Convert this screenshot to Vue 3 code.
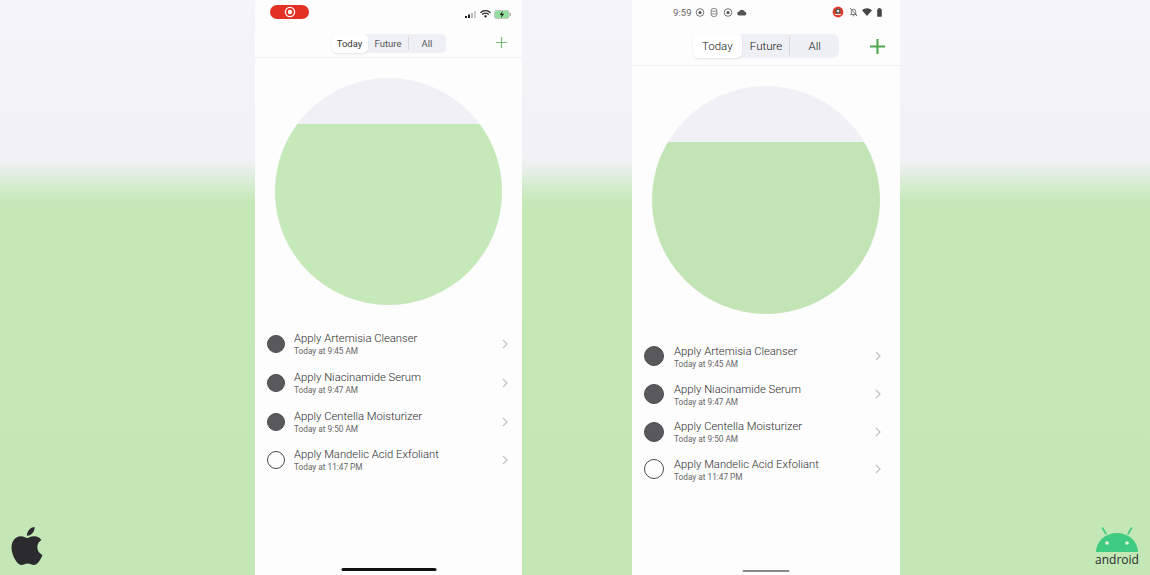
<script setup>
const tasks = [
  { title: 'Apply Artemisia Cleanser', time: 'Today at 9:45 AM', done: true },
  { title: 'Apply Niacinamide Serum', time: 'Today at 9:47 AM', done: true },
  { title: 'Apply Centella Moisturizer', time: 'Today at 9:50 AM', done: true },
  { title: 'Apply Mandelic Acid Exfoliant', time: 'Today at 11:47 PM', done: false },
]
const phones = [
  { id: 'ios', fill: '181px' },
  { id: 'droid', fill: '172px' },
]
</script>

<template>
  <div class="page">
    <div class="side side-left">
      <svg class="apple" viewBox="0 0 24 24" aria-label="Apple">
        <path fill="#2b2b2d" d="M12.152 6.896c-.948 0-2.415-1.078-3.96-1.04-2.04.027-3.91 1.183-4.961 3.014-2.117 3.675-.546 9.103 1.519 12.09 1.013 1.454 2.208 3.09 3.792 3.039 1.52-.065 2.09-.987 3.935-.987 1.831 0 2.35.987 3.96.948 1.637-.026 2.676-1.48 3.676-2.948 1.156-1.688 1.636-3.325 1.662-3.415-.039-.013-3.182-1.221-3.22-4.857-.026-3.04 2.48-4.494 2.597-4.559-1.429-2.09-3.623-2.324-4.39-2.376-2-.156-3.675 1.09-4.61 1.09zM15.53 3.83c.843-1.012 1.4-2.427 1.245-3.83-1.207.052-2.662.805-3.532 1.818-.78.896-1.454 2.338-1.273 3.714 1.338.104 2.715-.688 3.559-1.701"/>
      </svg>
    </div>

    <section v-for="p in phones" :key="p.id" class="phone" :class="p.id">
      <div class="status">
        <template v-if="p.id === 'ios'">
          <div class="rec">
            <svg width="12" height="12" viewBox="0 0 12 12"><circle cx="6" cy="6" r="4.6" fill="none" stroke="#fff" stroke-width="1.3"/><circle cx="6" cy="6" r="2.2" fill="#fff"/></svg>
          </div>
          <div class="grow"></div>
          <svg class="ios-ic" width="12" height="7" viewBox="0 0 12 7"><rect x="0" y="5" width="2" height="2" fill="#222"/><rect x="3" y="3.5" width="2" height="3.5" fill="#222"/><rect x="6" y="2" width="2" height="5" fill="#bbb"/><rect x="9" y="0" width="2" height="7" fill="#ccc"/></svg>
          <svg class="ios-ic" width="11" height="8" viewBox="0 0 11 8"><path d="M.5 2.8a7 7 0 0 1 10 0M2.2 4.5a4.6 4.6 0 0 1 6.6 0" fill="none" stroke="#222" stroke-width="1.3"/><path d="M3.9 6a2.2 2.2 0 0 1 3.2 0L5.500 7.800z" fill="#222"/></svg>
          <svg class="ios-ic" width="17" height="9" viewBox="0 0 17 9"><rect x=".5" y=".5" width="14.500" height="8" rx="2" fill="#93df9d" stroke="#c4c4c4"/><rect x="15.500" y="3" width="1.500" height="3" fill="#b5b5b5"/><path d="M8.600 1 5.600 5h2l-.6 3 3.200-4.200H8z" fill="#222"/></svg>
        </template>
        <template v-else>
          <span class="clock">9:59</span>
          <svg class="d-ic" width="9" height="9" viewBox="0 0 9 9"><circle cx="4.500" cy="4.500" r="3.800" fill="none" stroke="#666" stroke-width=".9"/><circle cx="4.500" cy="4.500" r="1.600" fill="#555"/></svg>
          <svg class="d-ic" width="7" height="9" viewBox="0 0 7 9"><rect x=".6" y=".6" width="5.800" height="7.800" rx="2" fill="none" stroke="#777" stroke-width=".9"/><path d="M.6 3.200h5.800M.6 5.800h5.800" stroke="#777" stroke-width=".8"/></svg>
          <svg class="d-ic" width="9" height="9" viewBox="0 0 9 9"><circle cx="4.500" cy="4.500" r="3.800" fill="none" stroke="#666" stroke-width=".9"/><circle cx="4.500" cy="4.500" r="1.600" fill="#555"/></svg>
          <svg class="d-ic" width="10" height="7" viewBox="0 0 10 7"><path d="M2.300 6.500a2 2 0 0 1-.2-4A3 3 0 0 1 7.600 2.400 2.100 2.100 0 0 1 7.800 6.500z" fill="#555"/></svg>
          <div class="grow"></div>
          <svg width="12" height="12" viewBox="0 0 12 12"><circle cx="6" cy="6" r="5.400" fill="#e6392f"/><rect x="3.300" y="2.800" width="5.400" height="4.700" rx="1" fill="#5d5a52"/><circle cx="6" cy="5" r="1.200" fill="#eee"/><rect x="3" y="8" width="6" height="1" fill="#eee"/></svg>
          <svg class="d-bell" width="9" height="10" viewBox="0 0 9 10"><path d="M1.500 7.500h6M2.300 7.500V4.500a2.200 2.200 0 0 1 4.400 0v3M3.800 8.800h1.400M1 1l7 8" fill="none" stroke="#666" stroke-width=".9"/></svg>
          <svg class="d-wifi" width="10" height="8" viewBox="0 0 10 8"><path d="M0 2.200a7.500 7.500 0 0 1 10 0L5 8z" fill="#444"/></svg>
          <svg class="d-batt" width="5" height="9" viewBox="0 0 5 9"><rect x=".5" y="1.200" width="4" height="7.300" rx=".6" fill="#444" stroke="#444" stroke-width=".6"/><rect x="1.500" y="0" width="2" height="1.200" fill="#444"/></svg>
        </template>
      </div>

      <header class="nav">
        <div class="seg">
          <div class="seg-item active">Today</div>
          <div class="seg-item">Future</div>
          <i class="seg-line"></i>
          <div class="seg-item">All</div>
        </div>
        <svg class="plus" viewBox="0 0 16 16"><path d="M8 0v16M0 8h16" /></svg>
      </header>

      <div class="gauge">
        <div class="water" :style="{ height: p.fill }"></div>
      </div>

      <ul class="list">
        <li v-for="t in tasks" :key="t.title" class="row">
          <span class="dot" :class="{ done: t.done }"></span>
          <div class="text">
            <div class="title">{{ t.title }}</div>
            <div class="time">{{ t.time }}</div>
          </div>
          <svg class="chev" width="6" height="10" viewBox="0 0 6 10"><path d="M1 1l4 4-4 4" fill="none" stroke="#c2c2c6" stroke-width="1.2"/></svg>
        </li>
      </ul>

      <div class="home"></div>
    </section>

    <div class="side side-right">
      <div class="android">
        <svg width="44" height="25" viewBox="0 0 44 25">
          <path d="M11 7 7.500 1M33 7l3.500-6" stroke="#3fcb80" stroke-width="1.600" stroke-linecap="round"/>
          <path d="M1 25a21 19 0 0 1 42 0z" fill="#3fcb80"/>
          <circle cx="12" cy="16" r="1.800" fill="#e6f5dc"/><circle cx="32" cy="16" r="1.800" fill="#e6f5dc"/>
        </svg>
        <span class="android-word">android</span>
      </div>
    </div>
  </div>
</template>

<style>
html, body { margin: 0; overflow: hidden; }
</style>

<style scoped>
.page {
  width: 1150px;
  height: 575px;
  display: flex;
  font-family: Roboto, "Liberation Sans", sans-serif;
  background: linear-gradient(#f4f4f9 0, #f1f1f6 160px, #c4e9b7 202px, #c3e8b6 100%);
}
.side { display: flex; align-items: flex-end; }
.side-left { width: 255px; padding: 0 0 10px 8px; box-sizing: border-box; }
.side-right { flex: 1; justify-content: flex-end; padding: 0 11px 8px 0; }
.apple { width: 38px; height: 38px; }
.android { display: flex; flex-direction: column; align-items: center; }
.android-word { font-family: "Open Sans", sans-serif; font-size: 12px; line-height: 14px; color: #2a2a2a; margin-top: 1px; }

.phone { position: relative; background: #fdfdfd; height: 575px; display: flex; flex-direction: column; align-items: stretch; }
.ios { width: 267px; margin-right: 110px; }
.droid { width: 268px; }

.status { display: flex; align-items: center; box-sizing: border-box; }
.ios .status { height: 28px; padding: 0 11px 4px 15px; gap: 3px; }
.ios-ic { margin-top: 4px; }
.droid .status { height: 25px; padding: 0 18px 1px 41px; }
.grow { flex: 1; }
.rec { width: 39px; height: 14px; border-radius: 7px; background: #e33126; display: flex; align-items: center; justify-content: center; }
.clock { font-size: 9.500px; color: #666; width: 22px; letter-spacing: .1px; }
.d-ic { margin-right: 4px; width: 10px; }
.d-bell { margin-left: 5px; }
.d-wifi { margin-left: 4px; }
.d-batt { margin-left: 5px; }

.nav { display: flex; align-items: center; justify-content: center; position: relative; box-sizing: border-box; border-bottom: 1px solid #f0f0f0; }
.ios .nav { height: 30px; padding: 1px 0 0; }
.droid .nav { height: 41px; padding: 1px 0 0; }
.seg { display: flex; align-items: stretch; background: #eff0f5; position: relative; }
.ios .seg { border-radius: 5px; height: 19px; font-size: 9.500px; }
.droid .seg { border-radius: 6px; height: 24px; font-size: 11.500px; font-weight: 300; }
.seg-item { display: flex; align-items: center; justify-content: center; color: #555; }
.ios .seg-item { width: 37px; }
.ios .seg-item.active { width: 36px; }
.ios .seg-item:nth-child(2) { width: 41px; }
.droid .seg-item { width: 48.700px; color: #111; }
.seg-item.active { background: #fff; border-radius: 5px; box-shadow: 0 1px 2px rgba(0,0,0,.1); color: #333; }
.droid .seg-item.active { color: #111; }
.seg-line { width: 1px; background: #d8d8dc; margin: 3px 0 3px -1px; }
.plus { position: absolute; fill: none; stroke: #7cbf7d; }
.ios .plus { right: 15px; top: 9px; width: 11px; height: 11px; stroke-width: 1.800; }
.droid .plus { right: 15px; top: 14px; width: 15px; height: 15px; stroke-width: 2.200; stroke: #4ea64f; }

.gauge { border-radius: 50%; background: #f1f0f6; overflow: hidden; display: flex; flex-direction: column; justify-content: flex-end; flex: none; align-self: center; }
.ios .gauge { width: 227px; height: 227px; margin-top: 20px; }
.droid .gauge { width: 228px; height: 228px; margin-top: 20px; }
.water { background: #c5e9b8; }
.droid .water { background: #c3e5b5; }

.list { list-style: none; margin: 0; padding: 0; }
.ios .list { margin-top: 20px; }
.droid .list { margin-top: 23.500px; }
.row { display: flex; align-items: center; }
.ios .row { height: 38.700px; padding: 0 14px 0 12px; }
.droid .row { height: 37.700px; padding: 0 19px 0 12px; }
.dot { flex: none; width: 18px; height: 18px; box-sizing: border-box; border-radius: 50%; border: 1.600px solid #4c4b4e; }
.droid .dot { width: 20px; height: 20px; border-width: 1.800px; }
.dot.done { background: #59585b; }
.text { flex: 1; padding: 1px 0 0 9px; }
.droid .text { padding: 2px 0 0 10px; }
.title { font-size: 11.250px; line-height: 14px; font-weight: 300; color: #2c2c2c; white-space: nowrap; }
.time { font-size: 8.250px; line-height: 11px; color: #666; white-space: nowrap; }
.home { position: absolute; height: 3px; left: 50%; transform: translateX(-50%); border-radius: 2px; }
.ios .home { width: 95px; bottom: 4px; background: #111; }
.droid .home { width: 47px; height: 2px; bottom: 3px; background: #8a8a8a; }
</style>
